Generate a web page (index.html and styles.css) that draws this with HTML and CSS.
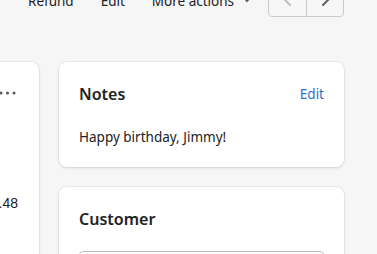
FILE: index.html
```html
<!DOCTYPE html>
<html>
<head>
<meta charset="utf-8">
<link rel="stylesheet" href="styles.css">
</head>
<body>
<div class="page">
  <header class="actions">
    <button class="act">Refund</button>
    <button class="act">Edit</button>
    <button class="act more">More actions <svg class="caret" width="10" height="10" viewBox="0 0 10 10"><path d="M2 3 L5 6.5 L8 3 Z" fill="#5c5f62"/></svg></button>
    <div class="pager">
      <button class="pg"><svg width="20" height="20" viewBox="0 0 20 20"><path d="M12 4 L6 10 L12 16" fill="none" stroke="#babec3" stroke-width="2" stroke-linecap="round" stroke-linejoin="round"/></svg></button>
      <button class="pg"><svg width="20" height="20" viewBox="0 0 20 20"><path d="M8 4 L14 10 L8 16" fill="none" stroke="#5c5f62" stroke-width="2" stroke-linecap="round" stroke-linejoin="round"/></svg></button>
    </div>
  </header>
  <main class="layout">
    <section class="card left">
      <div class="dots"><svg width="18" height="4" viewBox="0 0 18 4"><circle cx="2" cy="2" r="1.6" fill="#5c5f62"/><circle cx="8.5" cy="2" r="1.6" fill="#5c5f62"/><circle cx="15" cy="2" r="1.6" fill="#5c5f62"/></svg></div>
      <div class="amount">$1,240.48</div>
    </section>
    <div class="side">
      <section class="card notes">
        <div class="card-head">
          <h2>Notes</h2>
          <a class="link">Edit</a>
        </div>
        <p class="note">Happy birthday, Jimmy!</p>
      </section>
      <section class="card customer">
        <h2>Customer</h2>
        <div class="field"></div>
      </section>
    </div>
  </main>
</div>
</body>
</html>
```
FILE: styles.css
```css
html, body {
  margin: 0;
  padding: 0;
  background: #f6f6f7;
  overflow: hidden;
  font-family: "Noto Sans", "Open Sans", sans-serif;
  color: #202223;
}
.page {
  width: 377px;
  height: 254px;
  overflow: hidden;
}
.actions {
  display: flex;
  align-items: center;
  height: 36px;
  margin-top: -19px;
  padding-left: 28px;
}
.act {
  border: 0;
  background: none;
  padding: 3px 0 0;
  font: inherit;
  font-size: 13.5px;
  color: #202223;
  margin-right: 27px;
  display: flex;
  align-items: center;
}
.act.more { margin-right: 16px; }
.caret { margin-left: 8px; }
.pager {
  display: flex;
  border: 1px solid #c9cccf;
  border-radius: 4px;
  height: 36px;
  box-sizing: border-box;
}
.pg {
  width: 37px;
  border: 0;
  background: none;
  padding: 0;
  display: flex;
  align-items: center;
  justify-content: center;
}
.pg + .pg { border-left: 1px solid #c9cccf; }
.layout {
  display: grid;
  grid-template-columns: 239px 285px;
  column-gap: 20px;
  margin-left: -200px;
  margin-top: 45px;
}
.card {
  background: #fff;
  border-radius: 8px;
  box-shadow: 0 0 0 1px rgba(63,63,68,0.05), 0 1px 3px rgba(63,63,68,0.15);
}
.left {
  height: 300px;
  padding: 20px 21px 20px 20px;
  box-sizing: border-box;
}
.dots {
  display: flex;
  justify-content: flex-end;
  align-items: center;
  height: 20px;
  margin-top: 1px;
  margin-right: 1px;
}
.amount {
  text-align: right;
  margin-top: 90px;
  font-family: "Liberation Sans", Arial, sans-serif;
  font-size: 14px;
  line-height: 20px;
}
.side {
  display: flex;
  flex-direction: column;
  gap: 20px;
}
.notes, .customer {
  padding: 20px;
}
.card-head {
  display: flex;
  justify-content: space-between;
  align-items: center;
}
h2 {
  margin: 0;
  font-size: 16px;
  font-weight: 600;
  line-height: 24px;
}
.link {
  color: #2c6ecb;
  font-size: 13.5px;
}
.note {
  margin: 21px 0 0;
  font-size: 13.5px;
  line-height: 20px;
}
.customer { height: 120px; }
.field {
  margin-top: 20px;
  height: 36px;
  border: 1px solid #babfc3;
  border-radius: 4px;
}
```
